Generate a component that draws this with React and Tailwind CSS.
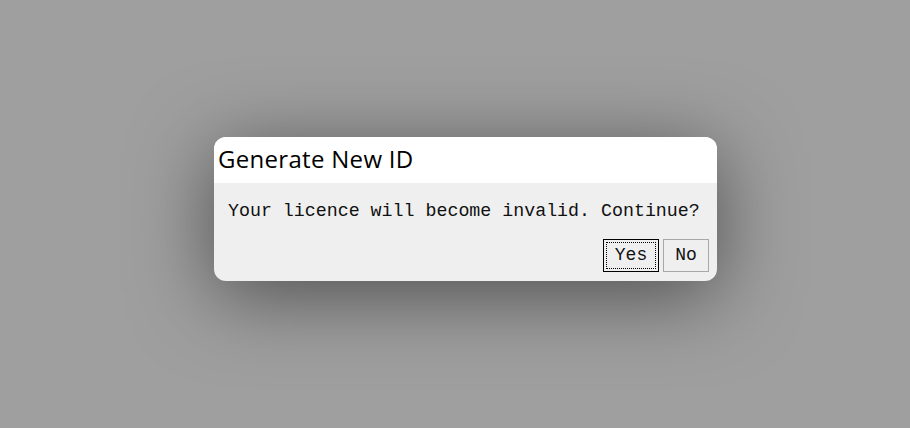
import React from 'react';

const App = () => {
  return (
    <div className="w-[910px] h-[428px] bg-[#9f9f9f] pl-[214px] pt-[137px] overflow-hidden">
      <div className="w-[503px] rounded-xl overflow-hidden bg-[#efefef] shadow-[0_14px_80px_rgba(0,0,0,0.5)]">
        <div className="h-[46px] bg-white pl-[4px] pt-[5px]">
          <h2 className="text-[24px] leading-[33px] tracking-[0.3px] text-black font-['Open_Sans',sans-serif]">Generate New ID</h2>
        </div>
        <div className="h-[98px] px-[14px] pt-[16px]">
          <p className="text-[18.3px] leading-[24px] text-[#111] font-['Liberation_Mono',monospace]">
            Your licence will become invalid. Continue?
          </p>
          <div className="flex justify-end gap-[4px] mt-[16px] mr-[-6px]">
            <button className="w-[56px] h-[33px] border border-black bg-[#efefef] p-[2px] font-['Liberation_Mono',monospace] text-[18px] text-[#111]">
              <span className="flex items-center justify-center w-full h-full border border-dotted border-black">Yes</span>
            </button>
            <button className="w-[46px] h-[33px] border border-[#a8a8a8] bg-[#efefef] font-['Liberation_Mono',monospace] text-[18px] text-[#111]">
              No
            </button>
          </div>
        </div>
      </div>
    </div>
  );
};

export default App;
